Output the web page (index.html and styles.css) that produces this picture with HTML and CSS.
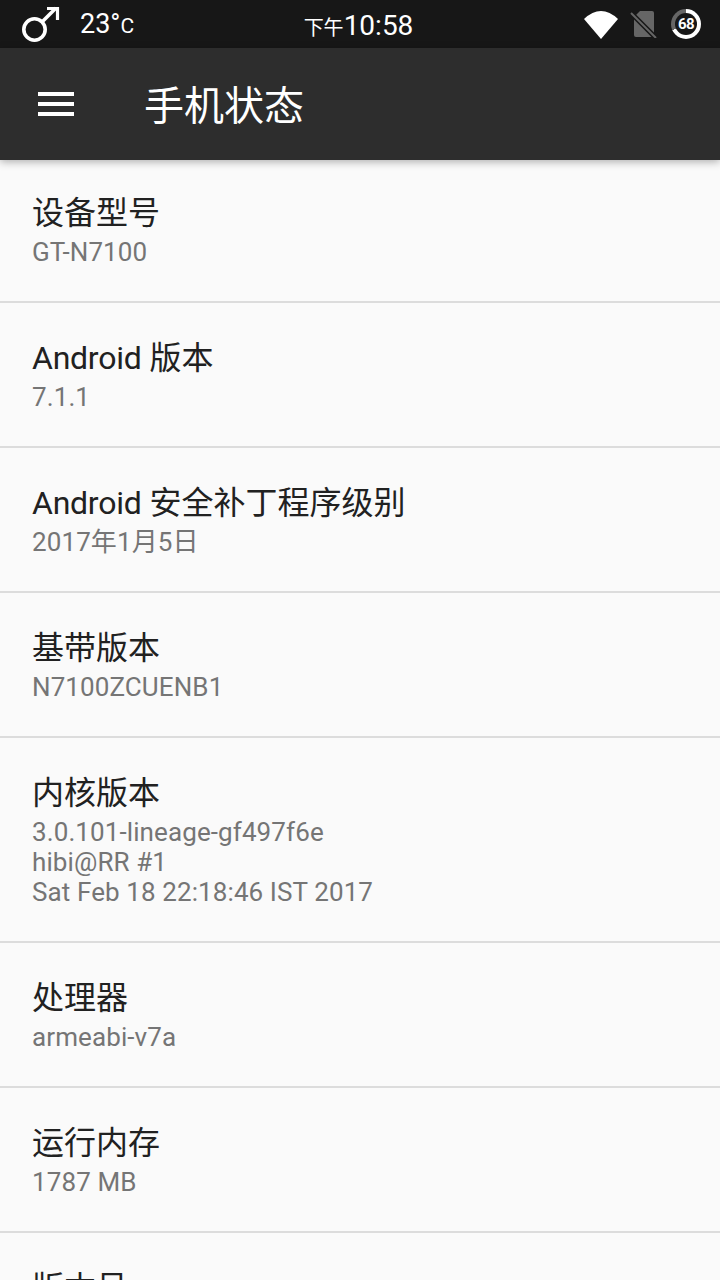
FILE: index.html
```html
<!DOCTYPE html>
<html lang="zh-CN">
<head>
    <meta charset="UTF-8">
    <meta name="viewport" content="width=device-width, initial-scale=1.0">
    <title>手机状态</title>
    <link rel="stylesheet" href="styles.css">
</head>
<body>
    <div id="screen">
        <div class="status-bar">
            <div class="status-left">
                <svg class="icon-male" width="40" height="40" viewBox="0 0 40 40">
                    <circle cx="14.5" cy="25.5" r="10.7" fill="none" stroke="#fff" stroke-width="3.6"/>
                    <path d="M22 18L36 4" fill="none" stroke="#fff" stroke-width="3.6"/>
                    <path d="M27 4.5H37.5V16" fill="none" stroke="#fff" stroke-width="3.2"/>
                </svg>
                <span class="temp">23°<small>C</small></span>
            </div>
            <div class="clock"><small>下午</small>10:58</div>
            <div class="status-right">
                <svg width="34" height="29" viewBox="0 0 34 29"><path d="M0 9Q17 -7 34 9L17 29Z" fill="#fff"/></svg>
                <svg width="29" height="28" viewBox="0 0 29 28">
                    <path d="M10 1H22Q24 1 24 3V25Q24 27 22 27H6Q4 27 4 25V7Z" fill="#666"/>
                    <path d="M1 3L26 28" stroke="#171717" stroke-width="5"/>
                    <path d="M1 3L26 28" stroke="#666" stroke-width="2"/>
                </svg>
                <div class="battery"><span>68</span></div>
            </div>
        </div>

        <header class="toolbar">
            <div class="menu-icon"><i></i><i></i><i></i></div>
            <h1>手机状态</h1>
        </header>

        <main class="list">
            <div class="row"><div class="title">设备型号</div><div class="value">GT-N7100</div></div>
            <div class="row"><div class="title"><span class="latin">Android</span> 版本</div><div class="value">7.1.1</div></div>
            <div class="row"><div class="title"><span class="latin">Android</span> 安全补丁程序级别</div><div class="value">2017年1月5日</div></div>
            <div class="row"><div class="title">基带版本</div><div class="value">N7100ZCUENB1</div></div>
            <div class="row"><div class="title">内核版本</div><div class="value">3.0.101-lineage-gf497f6e<br>hibi@RR #1<br>Sat Feb 18 22:18:46 IST 2017</div></div>
            <div class="row"><div class="title">处理器</div><div class="value">armeabi-v7a</div></div>
            <div class="row"><div class="title">运行内存</div><div class="value">1787 MB</div></div>
            <div class="row"><div class="title">版本号</div></div>
        </main>
    </div>
</body>
</html>
```
FILE: styles.css
```css
html, body {
    margin: 0;
    padding: 0;
}

body {
    font-family: Roboto, "Noto Sans CJK SC", sans-serif;
    background-color: #fafafa;
}

#screen {
    width: 720px;
    height: 1280px;
    overflow: hidden;
    position: relative;
}

.status-bar {
    height: 48px;
    background-color: #171717;
    color: #fff;
    display: flex;
    align-items: center;
    justify-content: space-between;
}

.status-left {
    display: flex;
    align-items: center;
    padding-left: 20px;
    gap: 20px;
    width: 238px;
}

.temp {
    font-size: 27px;
}

.temp small {
    font-size: 21px;
}

.clock {
    padding-top: 2px;
    font-size: 28px;
}

.clock small {
    font-size: 20px;
}

.status-right {
    display: flex;
    align-items: center;
    gap: 12px;
    padding-right: 19px;
    width: 242px;
    justify-content: flex-end;
}

.battery {
    width: 30px;
    height: 30px;
    border-radius: 50%;
    background: conic-gradient(#fff 68%, #666 68%);
    display: flex;
    align-items: center;
    justify-content: center;
}

.battery span {
    width: 22px;
    height: 22px;
    border-radius: 50%;
    background-color: #171717;
    font-size: 15px;
    font-weight: 700;
    line-height: 22px;
    text-align: center;
    letter-spacing: -0.5px;
}

.toolbar {
    height: 112px;
    background-color: #2d2d2d;
    color: #fff;
    display: flex;
    align-items: center;
    box-shadow: 0 2px 8px rgba(0, 0, 0, 0.3);
    position: relative;
}

.menu-icon {
    margin-left: 38px;
    width: 36px;
    display: flex;
    flex-direction: column;
    gap: 6px;
}

.menu-icon i {
    display: block;
    height: 4px;
    background-color: #fff;
}

.toolbar h1 {
    margin: 0 0 2px 70px;
    font-size: 40px;
    font-weight: 400;
}

.row {
    padding: 33px 32px 34px;
    border-bottom: 2px solid #dcdcdc;
}

.row:first-child {
    padding-top: 31px;
}

.title {
    font-size: 32px;
    line-height: 44px;
    color: #212121;
}

.title .latin {
    letter-spacing: -0.25px;
}

.value {
    margin-top: 2px;
    font-size: 26px;
    line-height: 30px;
    letter-spacing: 0.1px;
    color: #757575;
}
```
